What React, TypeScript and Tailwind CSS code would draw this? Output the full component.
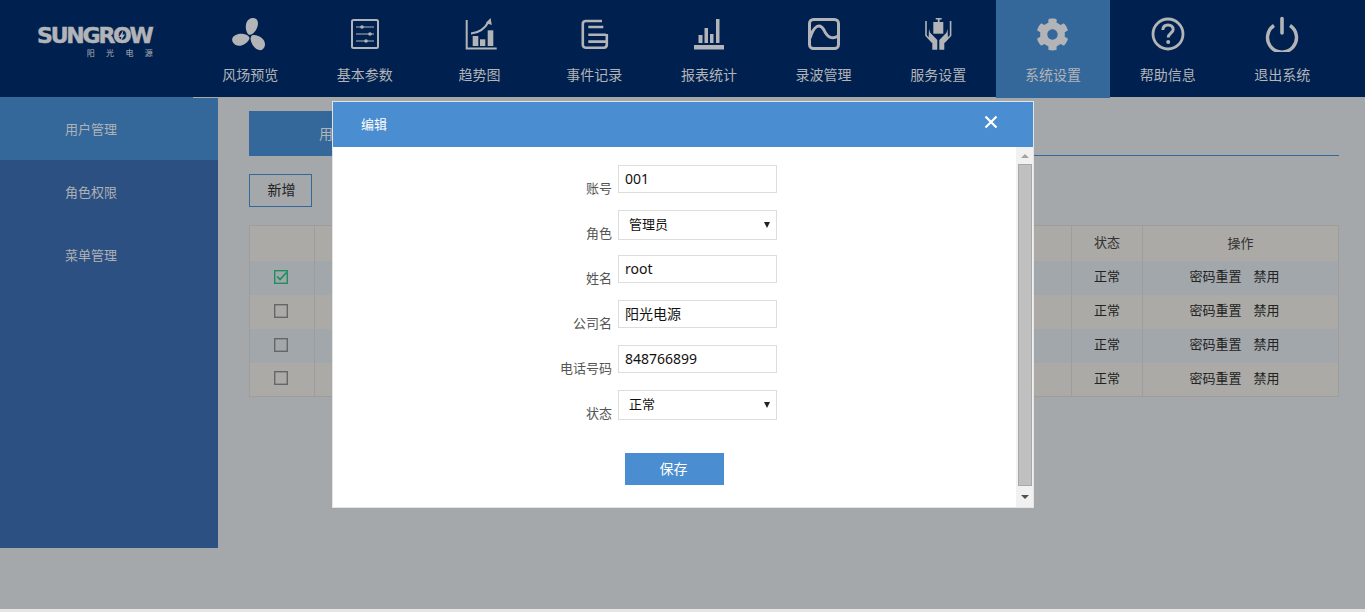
import { FaCog } from "react-icons/fa";

const font = { fontFamily: '"Noto Sans", "Noto Sans CJK SC", sans-serif' };

const Svg = ({ children }: { children: React.ReactNode }) => (
  <svg width="36" height="36" viewBox="0 0 36 36" fill="none" stroke="#b2b4b7" strokeWidth="2">{children}</svg>
);

const blade = "M15.5 17.5C12 11 14 2.5 20.5 2C28 1.5 27.5 12 21 17.5C19 19.2 16.5 19.2 15.5 17.5Z";

const icons = [
  <Svg key="fan">
    <g fill="#b2b4b7" stroke="none">
      <path d={blade} />
      <path d={blade} transform="rotate(120 18 20)" />
      <path d={blade} transform="rotate(240 18 20)" />
    </g>
  </Svg>,
  <Svg key="params">
    <rect x="5" y="4" width="26" height="28" rx="1.5" />
    <g strokeWidth="1.2">
      <path d="M9 11H27M9 18H27M9 25H27" />
    </g>
    <g fill="#b2b4b7" stroke="none">
      <circle cx="15" cy="11" r="1.8" />
      <circle cx="23" cy="18" r="1.8" />
      <circle cx="19" cy="25" r="1.8" />
    </g>
  </Svg>,
  <Svg key="trend">
    <path d="M4.7 4V32.5H34.7" />
    <path d="M9 17.5C16 17 22 14 26.5 6" strokeWidth="2.2" />
    <path d="M23.8 7L28.6 2L29.8 9Z" fill="#b2b4b7" stroke="none" />
    <g fill="#b2b4b7" stroke="none">
      <rect x="10.7" y="20" width="5.6" height="10" />
      <rect x="18" y="23.3" width="5.3" height="6.7" />
      <rect x="25.7" y="14.3" width="5.6" height="15.7" />
    </g>
  </Svg>,
  <Svg key="doc">
    <g strokeWidth="2.6">
      <path d="M26 5H9.5A3 3 0 0 0 6.8 8V29A3 3 0 0 0 9.5 31.7H28A3 3 0 0 0 30.8 29V18" />
      <path d="M12.3 11H27.3M12.3 18.7H30M12.3 25.6H30" />
    </g>
  </Svg>,
  <Svg key="bars">
    <g fill="#b2b4b7" stroke="none">
      <rect x="3" y="29" width="30" height="4.5" />
      <rect x="7.5" y="19" width="4" height="8" />
      <rect x="13.5" y="12" width="3.5" height="15" />
      <rect x="19" y="18" width="3.5" height="9" />
      <rect x="25" y="3" width="3.5" height="24" />
    </g>
  </Svg>,
  <Svg key="wave">
    <rect x="3.5" y="3.5" width="29" height="29" rx="4" strokeWidth="3" />
    <path d="M4 22C8 9 14 7 18 14C21 21 26 24 32 20" strokeWidth="3" />
  </Svg>,
  <Svg key="hands">
    <g fill="#b2b4b7" stroke="none">
      <rect x="13.3" y="6" width="10" height="11.7" />
      <path d="M15.7 2H21.7V3.6H19.6V6H17.8V3.6H15.7Z" />
      <path d="M9 13L10.2 16.8L17.3 24V33.7H12.3V26.5L8.6 22.4Z" />
      <path d="M27.6 13L26.4 16.8L19.3 24V33.7H24.3V26.5L28 22.4Z" />
    </g>
    <path d="M6 5V19.5L12.5 26.5M30.6 5V19.5L24.1 26.5" strokeWidth="1.6" />
  </Svg>,
  <div key="gear" className="w-[36px] h-[36px] flex items-center justify-center"><FaCog size={33} color="#b2b4b7" /></div>,
  <Svg key="help">
    <circle cx="18" cy="18" r="15" strokeWidth="2.8" />
    <path d="M12.8 14C13 10.5 15 9 18 9C21 9 23.2 10.8 23.2 13.5C23.2 17 18.2 17.4 18.2 21.5" strokeWidth="3" />
    <circle cx="18.2" cy="26" r="2" fill="#b2b4b7" stroke="none" />
  </Svg>,
  <Svg key="power">
    <path d="M10 9.5A14.5 14.5 0 1 0 26 9.5" strokeWidth="3.4" />
    <path d="M18 2.5V17" strokeWidth="3.6" strokeLinecap="round" />
  </Svg>,
];

const navLabels = ["风场预览", "基本参数", "趋势图", "事件记录", "报表统计", "录波管理", "服务设置", "系统设置", "帮助信息", "退出系统"];
const sideItems = ["用户管理", "角色权限", "菜单管理"];

const Field = ({ label, value }: { label: string; value: string }) => (
  <div className="flex h-[28px]">
    <label className="w-[285px] pt-[14px] pr-[6px] text-right text-[13px] leading-[18px] text-[#555]">{label}</label>
    <input readOnly value={value} className="w-[159px] h-[28px] border border-[#ddd] px-[6px] pb-[2px] text-[14px] text-[#111] outline-none" style={font} />
  </div>
);

const Select = ({ label, value }: { label: string; value: string }) => (
  <div className="flex h-[30px]">
    <label className="w-[285px] pt-[14px] pr-[6px] text-right text-[13px] leading-[18px] text-[#555]">{label}</label>
    <div className="relative w-[159px] h-[30px] border border-[#ddd] pl-[10px] text-[13px] leading-[27px] text-[#111]">
      {value}
      <span className="absolute right-[6px] top-[11px] w-0 h-0 border-x-[3px] border-t-[6px] border-x-transparent border-t-[#222]" />
    </div>
  </div>
);

const CheckBox = ({ on }: { on?: boolean }) => (
  <svg width="14" height="14" viewBox="0 0 14 14" fill="none" className="ml-[24px] mb-[2px] block">
    <rect x="0.7" y="0.7" width="12.6" height="12.6" stroke={on ? "#1f8f5f" : "#666"} strokeWidth="1.4" />
    {on && <path d="M3.2 6.5L6 9.5L12.5 2.5" stroke="#1f8f5f" strokeWidth="1.8" />}
  </svg>
);

export default function App() {
  return (
    <div className="relative w-[1365px] h-[612px] overflow-hidden bg-[#a5a8ab]" style={font}>
      <div className="relative flex h-[97px] bg-[#00214f]">
        <div className="w-[192.8px] pl-[37px] pt-[25px]">
          <div className="relative w-[116px] text-[#b2b4b7]">
            <div className="text-[22px] leading-[22px] font-bold tracking-[-2.2px] whitespace-nowrap [-webkit-text-stroke:0.5px_#b2b4b7]" style={{ fontFamily: '"DejaVu Sans", sans-serif' }}>SUNGROW</div>
            <svg width="8" height="12" viewBox="0 0 8 12" className="absolute left-[81px] top-[5px]"><path d="M5.5 0L1 7H3.5L2 12L7 4.5H4.5Z" fill="#b2b4b7" /></svg>
            <div className="text-right text-[8px] leading-[11px] tracking-[11.3px] mr-[-11px]">阳光电源</div>
          </div>
        </div>
        {navLabels.map((l, i) => (
          <div key={l} className={`w-[114.7px] h-[98px] flex flex-col items-center pt-[16px] border-b ${i === 7 ? "bg-[#35689a] border-[#35689a]" : "border-[#a8a8a2]"}`}>
            {icons[i]}
            <div className="mt-[13px] text-[14px] leading-[20px] text-[#b2b4b7]">{l}</div>
          </div>
        ))}
      </div>

      <div className="flex">
        <div className="w-[218px] h-[451px] bg-[#2c5082]">
          {sideItems.map((s, i) => (
            <div key={s} className={`h-[63px] pl-[65px] text-[13px] leading-[64px] text-[#aeb2b6] ${i === 0 ? "bg-[#35689a]" : ""}`}>{s}</div>
          ))}
        </div>
        <div className="w-[1121px] pl-[31px]">
          <div className="mt-[14px] border-b border-[#35689a] h-[45px]">
            <div className="w-[196px] h-[45px] bg-[#35689a] text-center text-[14px] leading-[45px] text-[#b2b4b7]">用户管理</div>
          </div>
          <button className="mt-[18px] w-[63px] h-[33px] border border-[#35689a] pl-[2px] pb-[2px] text-[14px] text-[#222]">新增</button>
          <table className="mt-[18px] w-[1090px] table-fixed border-collapse border border-[#9c9d9c] text-[13px] text-[#222]">
            <colgroup>
              <col className="w-[65px]" />
              <col />
              <col className="w-[71px]" />
              <col className="w-[196px]" />
            </colgroup>
            <tbody>
              <tr className="h-[35px] bg-[#abaaa6] text-[#333]">
                <td className="border-r border-[#9c9d9c]" />
                <td className="border-r border-[#9c9d9c]" />
                <td className="border-r border-[#9c9d9c] text-center pb-[1px]">状态</td>
                <td className="text-center">操作</td>
              </tr>
              {[0, 1, 2, 3].map(r => (
                <tr key={r} className={`h-[34px] ${r % 2 === 0 ? "bg-[#a2a7ab]" : "bg-[#abaaa6]"}`}>
                  <td className="border-r border-[#9c9d9c]"><CheckBox on={r === 0} /></td>
                  <td className="border-r border-[#9c9d9c]" />
                  <td className="border-r border-[#9c9d9c] text-center pb-[1px]">正常</td>
                  <td className="text-center pb-[1px] pr-[12px]">密码重置<span className="ml-[12px]">禁用</span></td>
                </tr>
              ))}
            </tbody>
          </table>
        </div>
      </div>

      <div className="absolute left-0 bottom-0 w-full h-[3px] bg-[#e6e6e6]" />

      <div className="absolute left-[332px] top-[101px] w-[702px] h-[407px] border border-[#e4e4e4] bg-white flex flex-col">
        <div className="h-[45px] shrink-0 flex items-center justify-between pl-[28px] pr-[35px] bg-[#4a8dd0] text-white text-[13px]">
          <span>编辑</span>
          <svg width="14" height="14" viewBox="0 0 14 14" stroke="#fff" strokeWidth="2.2" className="mb-[5px]"><path d="M1.5 1.5L12.5 12.5M12.5 1.5L1.5 12.5" /></svg>
        </div>
        <div className="flex flex-1 min-h-0">
          <div className="flex-1 pt-[18px] flex flex-col">
            <Field label="账号" value="001" />
            <div className="h-[17px]" />
            <Select label="角色" value="管理员" />
            <div className="h-[15px]" />
            <Field label="姓名" value="root" />
            <div className="h-[17px]" />
            <Field label="公司名" value="阳光电源" />
            <div className="h-[17px]" />
            <Field label="电话号码" value="848766899" />
            <div className="h-[17px]" />
            <Select label="状态" value="正常" />
            <button className="ml-[292px] mt-[33px] w-[99px] h-[32px] bg-[#4a8dd0] pr-[2px] pb-[2px] text-white text-[14px]">保存</button>
          </div>
          <div className="w-[17px] bg-[#f1f1f1] flex flex-col items-center">
            <div className="h-[17px] flex items-center justify-center">
              <span className="w-0 h-0 border-x-[4px] border-b-[4px] border-x-transparent border-b-[#a3a3a3]" />
            </div>
            <div className="w-[14px] flex-1 bg-[#c0c0c0] border border-[#a8a8a8]" />
            <div className="h-[21px] flex items-center justify-center">
              <span className="w-0 h-0 border-x-[4px] border-t-[4px] border-x-transparent border-t-[#505050]" />
            </div>
          </div>
        </div>
      </div>
    </div>
  );
}
